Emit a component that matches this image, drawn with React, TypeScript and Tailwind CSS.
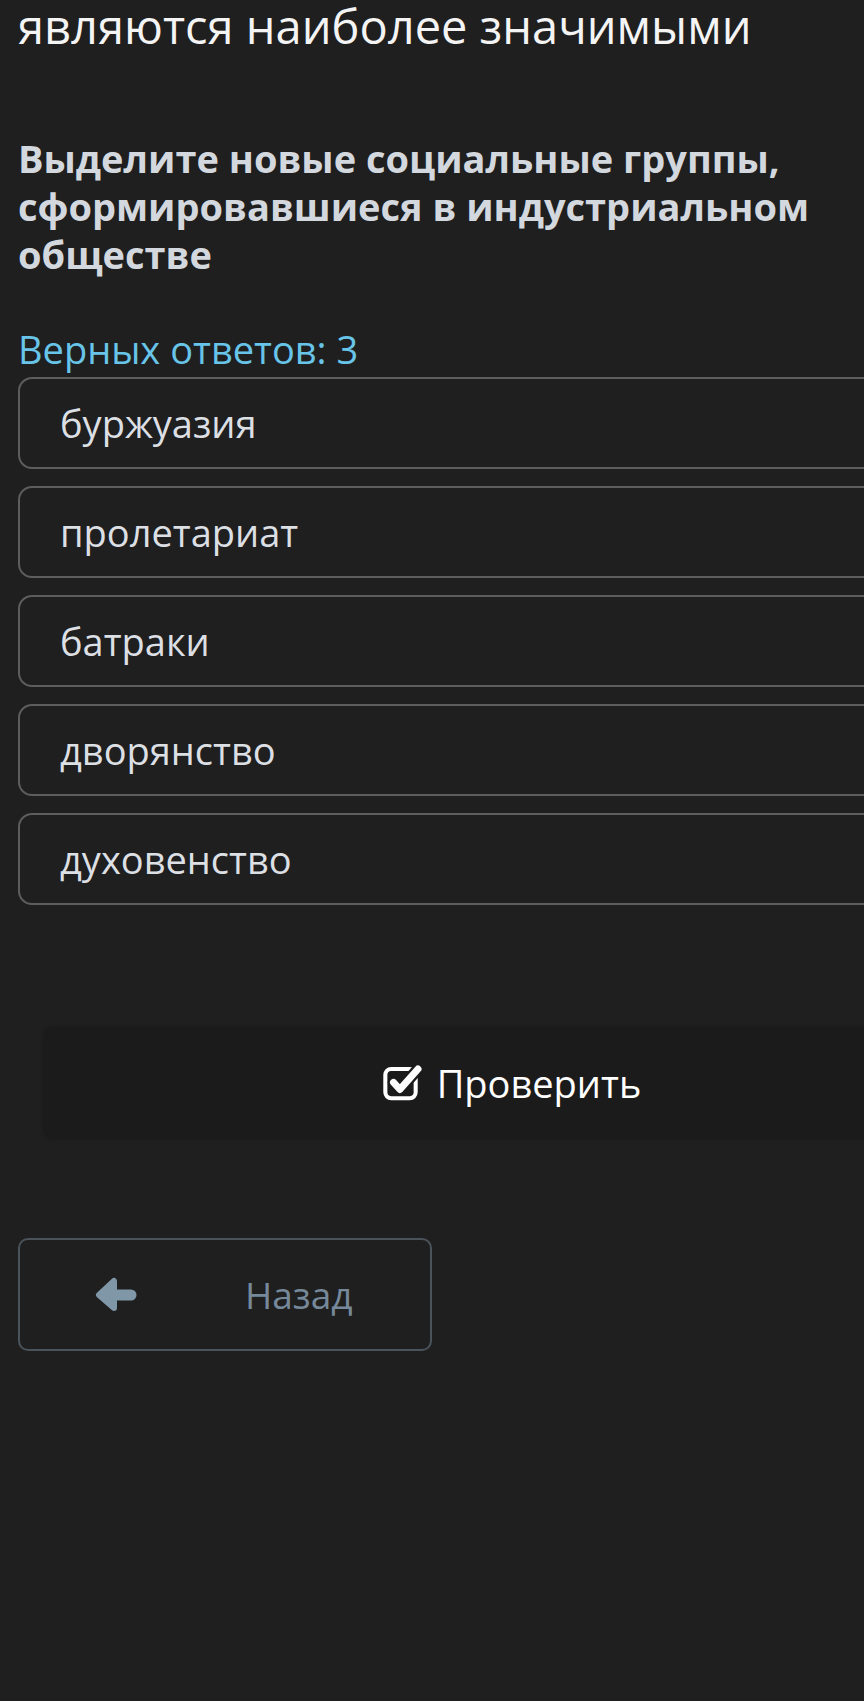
const options = ["буржуазия", "пролетариат", "батраки", "дворянство", "духовенство"];

const CheckSquareIcon = () => (
  <svg width="42" height="38" viewBox="0 0 36 32" fill="none">
    <rect x="2" y="4" width="26" height="25" rx="5" stroke="#ffffff" strokeWidth="3.5" />
    {/* вырез под галочку */}
    <path d="M9 15.5 L14.5 21.5 L30 4" stroke="#1b1b1b" strokeWidth="10" strokeLinecap="round" strokeLinejoin="round" />
    <path d="M9 15.5 L14.5 21.5 L30 4" stroke="#ffffff" strokeWidth="6" strokeLinecap="round" strokeLinejoin="round" />
  </svg>
);

const ArrowLeftIcon = () => (
  <svg width="42" height="36" viewBox="0 0 42 36" fill="#7f97a7">
    <path
      d="M4 18 L19 4 L19 31 Z"
      stroke="#7f97a7"
      strokeWidth="6"
      strokeLinejoin="round"
    />
    <path d="M16 18 L36 18" stroke="#7f97a7" strokeWidth="11" strokeLinecap="round" />
  </svg>
);

const App = () => {
  return (
    <div
      className="w-full min-h-[1701px] overflow-hidden bg-[#1f1f1f]"
      style={{ fontFamily: '"Open Sans", "Noto Sans", sans-serif' }}
    >
      <div className="w-[1010px] pl-[18px]">
        {/* хвост предыдущего вопроса */}
        <p className="text-[47px] leading-[52px] text-[#f4f4f4] whitespace-nowrap">
          являются наиболее значимыми
        </p>

        {/* вопрос */}
        <h2 className="mt-[82px] w-[830px] text-[38px] leading-[48px] font-bold text-[#d3d7de]">
          Выделите новые социальные группы, сформировавшиеся в индустриальном обществе
        </h2>

        <p className="mt-[49px] text-[38px] leading-[44px] text-[#68c4e8]">Верных ответов: 3</p>

        {/* варианты ответа */}
        <div className="mt-[6px] flex flex-col gap-[17px]">
          {options.map((opt) => (
            <div
              key={opt}
              className="h-[92px] flex items-center rounded-[14px] border-2 border-[#5c5d5f] bg-[#1f1f1f] pl-[40px]"
            >
              <span className="text-[38px] leading-none text-[#dcdfe4]">{opt}</span>
            </div>
          ))}
        </div>

        {/* кнопка проверки */}
        <div className="mt-[123px] ml-[27px] w-[934px] h-[110px] flex items-center justify-center gap-[12px] rounded-[8px] bg-[#1b1b1b] shadow-[0_0_4px_rgba(0,0,0,0.35)]">
          <CheckSquareIcon />
          <span className="text-[38px] text-white leading-none">Проверить</span>
        </div>

        {/* назад */}
        <div className="mt-[100px] w-[414px] h-[113px] flex items-center rounded-[10px] border-2 border-[#4a525a] pl-[75px]">
          <ArrowLeftIcon />
          <span className="ml-[108px] text-[37px] leading-none text-[#76899a]">Назад</span>
        </div>
      </div>
    </div>
  );
};

export default App;
